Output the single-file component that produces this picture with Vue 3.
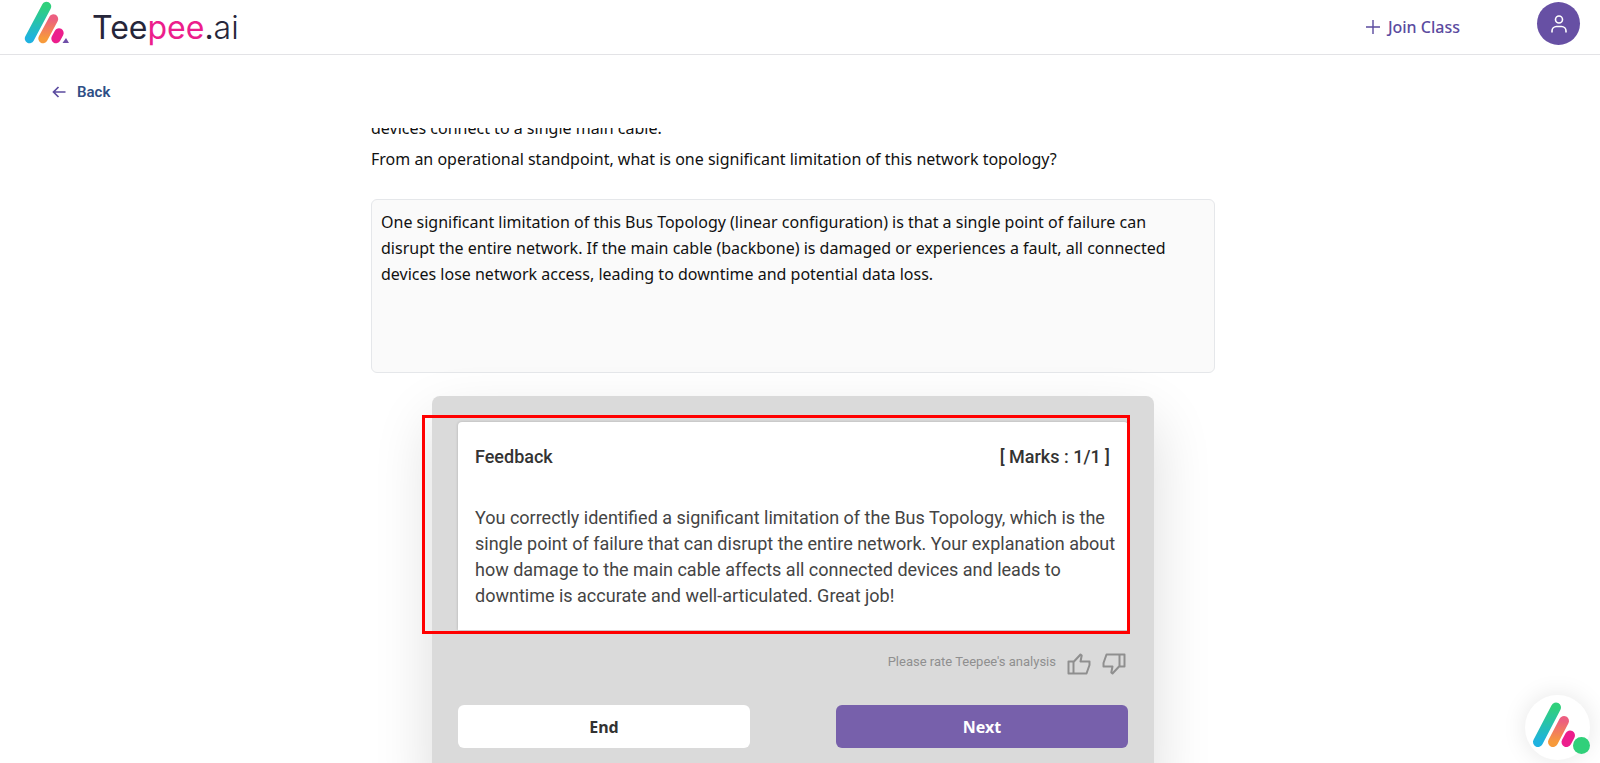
<script setup>
import { ref } from 'vue'

const question = ref([
  'devices connect to a single main cable.',
  'From an operational standpoint, what is one significant limitation of this network topology?',
])

const answer = ref(
  'One significant limitation of this Bus Topology (linear configuration) is that a single point of failure can disrupt the entire network. If the main cable (backbone) is damaged or experiences a fault, all connected devices lose network access, leading to downtime and potential data loss.'
)

const feedback = ref({
  marks: '1/1',
  text: 'You correctly identified a significant limitation of the Bus Topology, which is the single point of failure that can disrupt the entire network. Your explanation about how damage to the main cable affects all connected devices and leads to downtime is accurate and well-articulated. Great job!',
})
</script>

<template>
  <div class="page">
    <header class="header">
      <a href="#" class="logo">
        <svg class="logo-mark" width="46" height="44" viewBox="0 0 46 44">
          <defs>
            <linearGradient id="teal" x1="0" y1="0" x2="0" y2="1">
              <stop offset="0" stop-color="#2fd07c" />
              <stop offset="1" stop-color="#1fb2e0" />
            </linearGradient>
            <linearGradient id="orange" x1="0" y1="0" x2="0" y2="1">
              <stop offset="0" stop-color="#ec5f80" />
              <stop offset="1" stop-color="#f79a3b" />
            </linearGradient>
          </defs>
          <g fill="none" stroke-width="9.4" stroke-linecap="round">
            <path d="M22.500 5.500L5.500 37.500" stroke="url(#teal)" />
            <path d="M29.500 18L19 37.500" stroke="url(#orange)" />
            <path d="M35 32L32 37.500" stroke="#ec1e8c" />
          </g>
          <path d="M42 37L45 42H38.500z" fill="#6f4ea8" />
        </svg>
        <span class="logo-text">Tee<b>pee</b>.<i>ai</i></span>
      </a>
      <nav class="nav">
        <a href="#" class="join">
          <svg width="14" height="14" viewBox="0 0 14 14">
            <path d="M7 0v14M0 7h14" fill="none" stroke="#5b4b9f" stroke-width="1.4" />
          </svg>
          Join Class
        </a>
        <button class="avatar" aria-label="Profile">
          <svg width="18" height="20" viewBox="0 0 18 20" fill="none" stroke="#fff" stroke-width="1.6">
            <circle cx="9" cy="5.500" r="3.500" />
            <path d="M2 18.500v-1.500a4.500 4.500 0 0 1 4.500-4.500h5a4.500 4.500 0 0 1 4.500 4.500v1.500" />
          </svg>
        </button>
      </nav>
    </header>

    <a href="#" class="back">
      <svg width="14" height="12" viewBox="0 0 14 12" fill="none" stroke="#5b4b9f" stroke-width="1.7">
        <path d="M13.500 6H1.500M6.500 1L1.500 6l5 5" />
      </svg>
      Back
    </a>

    <main class="scroll">
      <div class="content">
        <div class="question">
          <p v-for="line in question" :key="line">{{ line }}</p>
        </div>
        <textarea v-model="answer" class="answer" aria-label="Your answer" readonly></textarea>

        <section class="card">
          <div class="feedback">
            <div class="feedback-head">
              <h2>Feedback</h2>
              <span>[ Marks : {{ feedback.marks }} ]</span>
            </div>
            <p>{{ feedback.text }}</p>
            <div class="highlight"></div>
          </div>

          <div class="rate">
            <span>Please rate Teepee's analysis</span>
            <button aria-label="Good analysis">
              <svg width="24" height="24" viewBox="0 0 24 24">
                <path d="M1.500 9.500h5v12h-5zM6.500 10l7-7.500 1.200 1-1.200 6h9v3.500l-3 8.500h-13" />
              </svg>
            </button>
            <button aria-label="Bad analysis">
              <svg width="24" height="24" viewBox="0 0 24 24">
                <path d="M22.500 14.500h-5v-12h5zM17.500 14l-7 7.500-1.200-1 1.200-6h-9V11l3-8.500h13" />
              </svg>
            </button>
          </div>

          <div class="actions">
            <button class="btn">End</button>
            <button class="btn primary">Next</button>
          </div>
        </section>
      </div>
    </main>

    <button class="chat" aria-label="Chat with Teepee">
      <svg width="65" height="65" viewBox="0 0 65 65">
        <g fill="none" stroke-width="10" stroke-linecap="round">
          <path d="M31 12.500L13 47" stroke="url(#teal)" />
          <path d="M39 26L28 47" stroke="url(#orange)" />
          <path d="M45 40.500L41.500 47" stroke="#ec1e8c" />
        </g>
        <circle cx="56.500" cy="50.500" r="8.500" fill="#30d07a" />
      </svg>
    </button>
  </div>
</template>

<style>
body {
  margin: 0;
  background: #fff;
}
</style>

<style scoped>
.page {
  display: flex;
  flex-direction: column;
  height: 100vh;
  overflow: hidden;
  font-family: Roboto, 'Liberation Sans', sans-serif;
  color: #333;
}

button {
  padding: 0;
  border: none;
  background: none;
  font-family: inherit;
  cursor: pointer;
}

a {
  text-decoration: none;
}

svg {
  display: block;
}

.header {
  display: flex;
  justify-content: space-between;
  flex-shrink: 0;
  height: 55px;
  padding: 0 20px 0 24px;
  box-sizing: border-box;
  border-bottom: 1px solid #e3e3e6;
}

.logo {
  display: flex;
  gap: 22px;
}

.logo-mark {
  margin-top: 1px;
}

.logo-text {
  font-family: Inter, sans-serif;
  font-size: 32px;
  line-height: 56px;
  color: #26263a;
}

.logo-text b {
  font-weight: 400;
  color: #ec1e8c;
}

.logo-text i {
  font-style: normal;
  font-weight: 300;
}

.nav {
  display: flex;
  gap: 77px;
}

.join {
  display: flex;
  align-items: center;
  gap: 8px;
  font-family: 'Noto Sans', sans-serif;
  font-size: 16px;
  font-weight: 500;
  color: #5b4b9f;
}

.avatar {
  display: flex;
  align-items: center;
  justify-content: center;
  width: 43px;
  height: 43px;
  margin-top: 2px;
  border-radius: 50%;
  background: #6750a4;
}

.back {
  display: flex;
  align-items: center;
  align-self: flex-start;
  gap: 11px;
  margin: 25px 0 24px 52px;
  font-size: 15px;
  font-weight: 600;
  line-height: 24px;
  color: #2f4f86;
}

.scroll {
  flex: 1;
  min-height: 0;
  padding-right: 14px;
  overflow: hidden;
}

.content {
  max-width: 844px;
  margin: -13px auto 0;
}

.question {
  display: flex;
  flex-direction: column;
  gap: 5px;
  margin-bottom: 27px;
  font-family: 'Noto Sans', sans-serif;
  font-size: 16px;
  line-height: 26px;
  color: #111;
}

.question p {
  margin: 0;
}

.answer {
  display: block;
  width: 100%;
  height: 174px;
  padding: 9px 32px 9px 9px;
  box-sizing: border-box;
  border: 1px solid #e5e7ea;
  border-radius: 6px;
  outline: none;
  resize: none;
  background: #fafafa;
  font-family: 'Noto Sans', sans-serif;
  font-size: 16px;
  line-height: 26px;
  color: #111;
}

.card {
  margin: 23px 61px 0;
  padding: 26px 26px 40px;
  border-radius: 8px;
  background: #dadada;
  box-shadow: 0 25px 60px rgba(0, 0, 0, 0.14);
}

.feedback {
  position: relative;
  padding: 22px 12px 21px 17px;
  border-radius: 4px 4px 0 0;
  background: #fff;
  box-shadow: 0 0 3px rgba(0, 0, 0, 0.2);
}

/* frame drawn over the feedback panel */
.highlight {
  position: absolute;
  top: -7px;
  right: -2px;
  bottom: -4px;
  left: -36px;
  border: 3px solid #f00;
  pointer-events: none;
}

.feedback-head {
  display: flex;
  justify-content: space-between;
  padding-right: 6px;
  font-size: 18px;
  font-weight: 500;
  line-height: 26px;
}

.feedback-head h2 {
  margin: 0;
  font-size: 18px;
  font-weight: 500;
}

.feedback p {
  margin: 35px 0 0;
  font-size: 18px;
  line-height: 26px;
  color: #444;
}

.rate {
  display: flex;
  justify-content: flex-end;
  gap: 11px;
  margin: 22px 2px 29px 0;
  font-size: 13px;
  line-height: 20px;
  color: #8f8f8f;
}

.rate path {
  fill: none;
  stroke: #8f8f8f;
  stroke-width: 2;
  stroke-linejoin: round;
}

.actions {
  display: flex;
  justify-content: space-between;
  gap: 86px;
}

.btn {
  flex: 1;
  height: 43px;
  border-radius: 6px;
  background: #fff;
  font-family: 'Noto Sans', sans-serif;
  font-size: 16px;
  font-weight: 700;
  color: #333;
}

.btn.primary {
  background: #7760ab;
  color: #fff;
}

.chat {
  position: fixed;
  right: 10px;
  bottom: 3px;
  width: 65px;
  height: 65px;
  border-radius: 50%;
  background: #fff;
  box-shadow: 0 0 24px rgba(0, 0, 0, 0.1);
}
</style>
